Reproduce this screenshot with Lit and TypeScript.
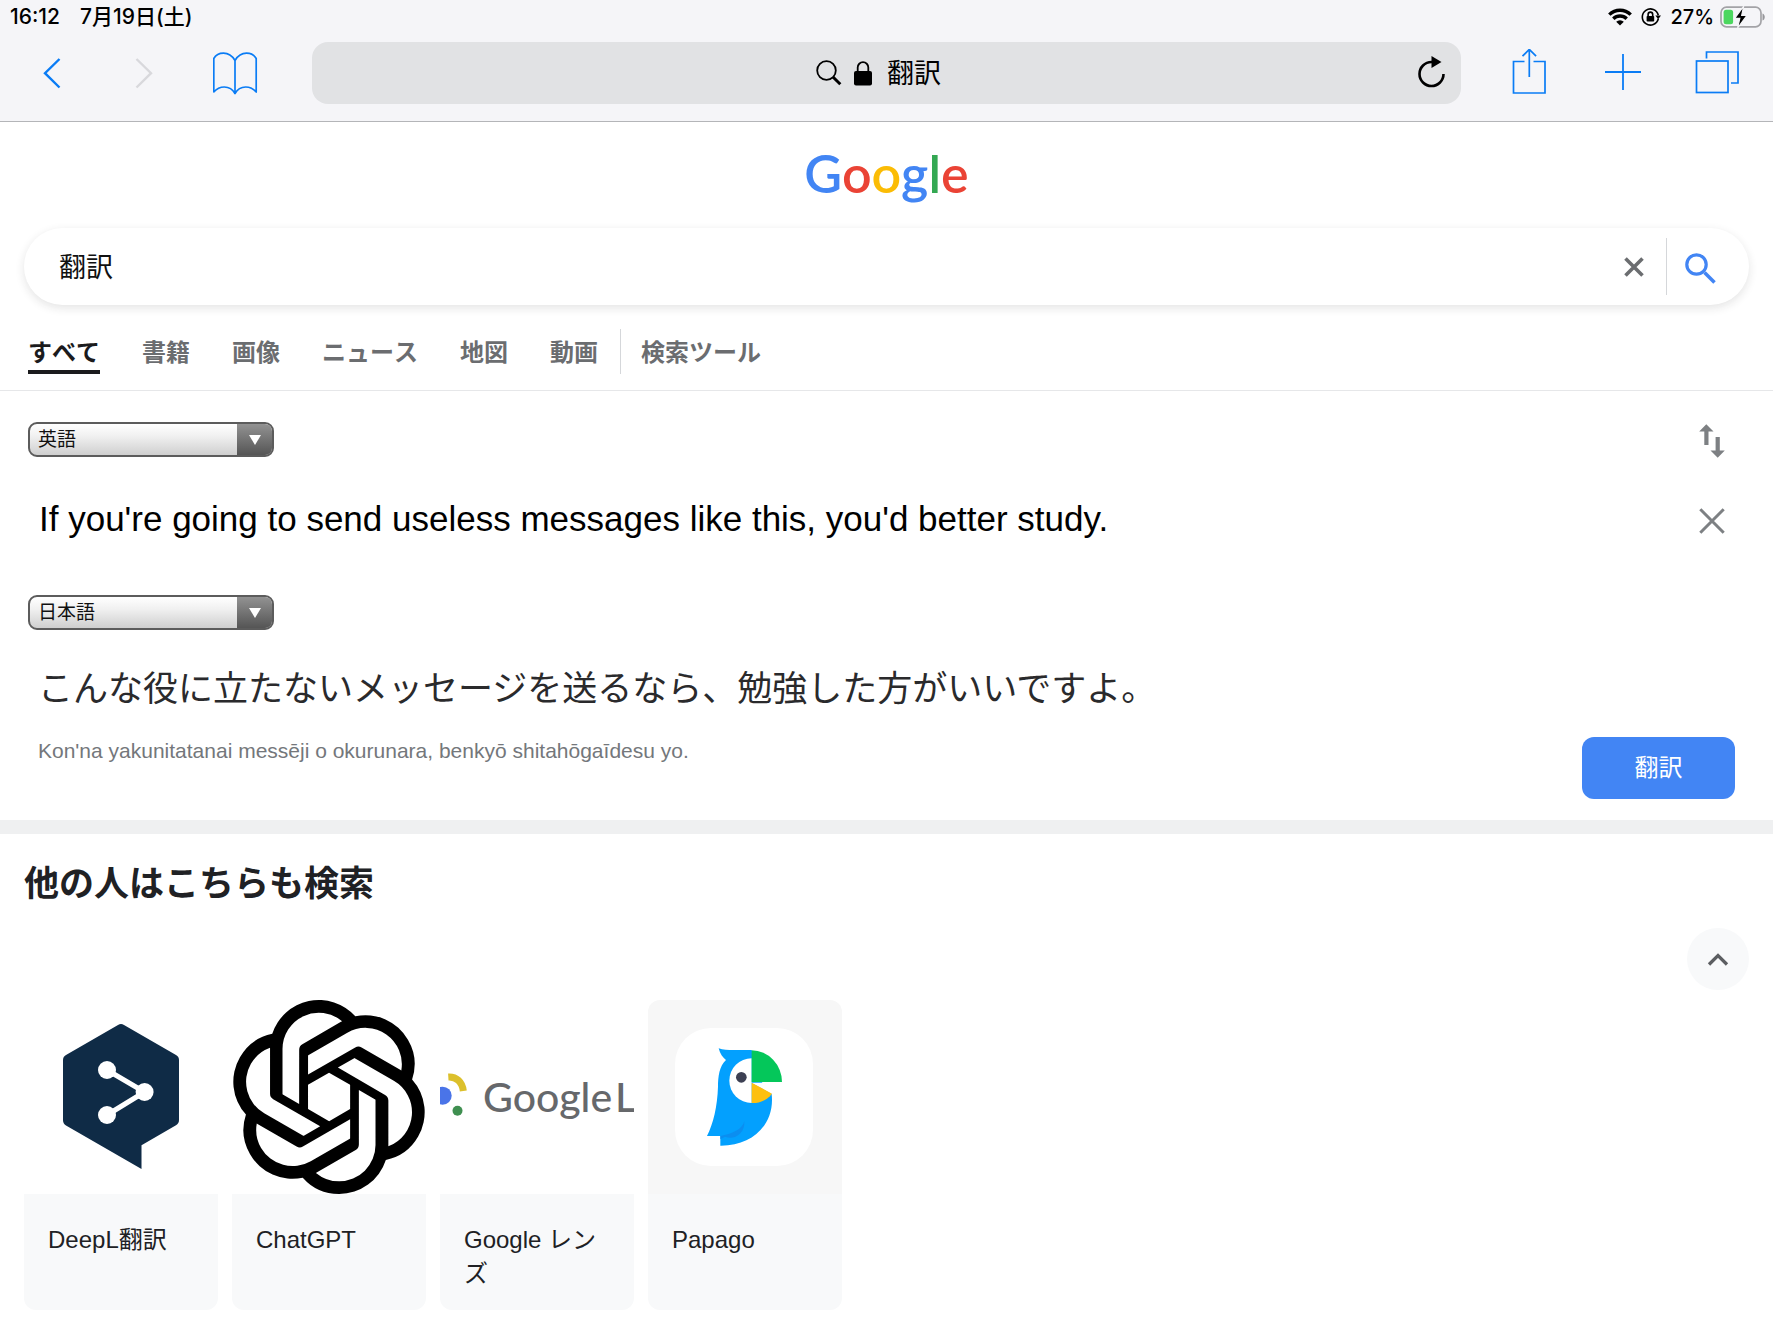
import { LitElement, html, css, svg } from "lit";
import { customElement, property, state } from "lit/decorators.js";

const fonts = css`"Liberation Sans", "Noto Sans CJK JP", sans-serif`;

/** Status line and browser toolbar. */
@customElement("browser-chrome")
class BrowserChrome extends LitElement {
  @property() query = "";

  static styles = css`
    :host {
      display: block;
      background: #f5f5f8;
      border-bottom: 1px solid #b4b5b8;
      font-family: ${fonts};
      color: #000;
    }
    svg { display: block; }
    button {
      border: 0;
      padding: 0;
      background: none;
      color: inherit;
      font: inherit;
      display: grid;
      place-items: center;
    }
    .status {
      display: flex;
      justify-content: space-between;
      align-items: center;
      height: 34px;
      padding: 0 8px 0 10px;
      font: 500 20px/24px Inter, "Noto Sans CJK JP", sans-serif;
    }
    .group { display: flex; align-items: center; }
    .clock { gap: 20px; font-size: 21px; }
    .icons { gap: 9px; }
    .percent { margin-right: -3px; }
    .toolbar {
      display: flex;
      align-items: center;
      gap: 44px;
      padding: 8px 32px 17px 28px;
      color: #0a7cf5;
    }
    .left { display: flex; gap: 44px; }
    .right { display: flex; gap: 46px; }
    .tool { width: 48px; height: 48px; }
    .tool:disabled { color: #d8d8dc; }
    .address {
      flex: 1;
      display: grid;
      grid-template-columns: 1fr auto 1fr;
      align-items: center;
      height: 62px;
      margin-left: 8px;
      padding: 0 14px;
      border-radius: 16px;
      background: #e1e2e4;
      color: #000;
    }
    .site {
      grid-column: 2;
      display: flex;
      align-items: center;
      gap: 12px;
      padding-right: 16px;
      font-size: 27px;
      line-height: 36px;
    }
    .site span { margin-left: 3px; padding-top: 2px; }
    .reload { justify-self: end; }
  `;

  render() {
    return html`
      <div class="status">
        <div class="group clock"><span>16:12</span><span>7月19日(土)</span></div>
        <div class="group icons">
          <svg width="24" height="18" viewBox="0 0 24 18" fill="none" stroke="#000" stroke-width="3.4">
            <path d="M1.3 6.6a15.2 15.2 0 0 1 21.4 0" />
            <path d="M5.3 10.8a9.5 9.5 0 0 1 13.4 0" />
            <path d="M12 17.6l-3.8-3.9a5.4 5.4 0 0 1 7.6 0z" fill="#000" stroke="none" />
          </svg>
          <svg width="20" height="20" viewBox="0 0 20 20" fill="none" stroke="#000" stroke-width="1.6">
            <path d="M17.3 11.8a8.1 8.1 0 1 1 0-3.6" />
            <path d="M14.4 8.5h5.6l-2.8 3.7z" fill="#000" stroke="none" />
            <rect x="5.6" y="9" width="7.6" height="5.6" rx=".8" fill="#000" stroke="none" />
            <path d="M7.1 9.2V7.4a2.3 2.3 0 0 1 4.6 0v1.8" />
          </svg>
          <span class="percent">27%</span>
          <svg width="45" height="22" viewBox="0 0 45 22">
            <rect x="1" y="1.2" width="40" height="19.6" rx="5.5" fill="none" stroke="#a3a3a7" stroke-width="1.7" />
            <path d="M42.500 7.500c3 1 3 6 0 7z" fill="#97979b" />
            <rect x="3.600" y="3.800" width="9.500" height="14.400" rx="2.500" fill="#4cd75f" />
            <path d="M23.700 .2L14.600 12.400h5.200L17.600 22 27 9.300h-5.300z" fill="#000" stroke="#f5f5f8" stroke-width="1.200" />
          </svg>
        </div>
      </div>
      <div class="toolbar">
        <div class="left">
          <button class="tool" aria-label="戻る">
            <svg width="20" height="32" viewBox="0 0 20 32" fill="none" stroke="currentColor" stroke-width="2.4"><path d="M17.500 2L3 16.200 17.500 30.500" /></svg>
          </button>
          <button class="tool" aria-label="進む" disabled>
            <svg width="20" height="32" viewBox="0 0 20 32" fill="none" stroke="currentColor" stroke-width="2.4"><path d="M2.500 2L17 16.200 2.500 30.500" /></svg>
          </button>
          <button class="tool" aria-label="ブックマーク">
            <svg width="46" height="44" viewBox="1 0 46 44" fill="none" stroke="currentColor" stroke-width="1.700" stroke-linejoin="round">
              <path d="M23 9.500C20 4.500 16 2.200 11.500 2.200S3.500 4.500 1.800 7.500V41c3-3.500 6.500-5 10.500-5s8.200 2 10.700 6.500c2.500-4.500 6.700-6.500 10.700-6.500s7.500 1.500 10.500 5V7.500c-1.700-3-5.200-5.300-9.700-5.300S26 4.500 23 9.500zM23 9.500v33" />
            </svg>
          </button>
        </div>
        <div class="address">
          <div class="site">
            <svg width="26" height="26" viewBox="0 0 26 26" fill="none" stroke="#000">
              <circle cx="10.500" cy="10.500" r="9.300" stroke-width="1.800" /><path d="M17 17l7.300 7.300" stroke-width="3" />
            </svg>
            <svg width="18" height="25" viewBox="0 0 18 25">
              <rect y="10" width="18" height="14.500" rx="2" /><path d="M3.700 11V6.500a5.300 5.300 0 0 1 10.600 0V11" fill="none" stroke="#000" stroke-width="1.800" />
            </svg>
            <span>${this.query}</span>
          </div>
          <button class="reload" aria-label="再読み込み">
            <svg width="30" height="34" viewBox="0 2 30 34" fill="none" stroke="#000" stroke-width="2.600">
              <path d="M26.500 20A12 12 0 1 1 14.500 8h3" /><path d="M14.500 2v12l10-6z" fill="#000" stroke="none" />
            </svg>
          </button>
        </div>
        <div class="right">
          <button class="tool" aria-label="共有">
            <svg width="36" height="48" viewBox="0 2 36 48" fill="none" stroke="currentColor" stroke-width="1.700">
              <path d="M13.500 14.500H2.500v31.500h31.500V14.500H22.500M18.300 30V2.500M11.500 9.200l6.800-6.800 6.800 6.800" />
            </svg>
          </button>
          <button class="tool" aria-label="新規タブ">
            <svg width="36" height="38" viewBox="0 0 36 38" stroke="currentColor" stroke-width="1.800"><path d="M18 0v36M0 18h36" /></svg>
          </button>
          <button class="tool" aria-label="タブ一覧">
            <svg width="44" height="44" viewBox="0 1 44 44" fill="none" stroke="currentColor" stroke-width="1.700">
              <rect x="1.500" y="11" width="31.500" height="31.500" /><path d="M11.500 8.500V2h31.500v31h-7" />
            </svg>
          </button>
        </div>
      </div>
    `;
  }
}

/** Search header: logo, search box and category tabs. */
@customElement("search-header")
class SearchHeader extends LitElement {
  @property() query = "";
  @state() private tabs = ["すべて", "書籍", "画像", "ニュース", "地図", "動画"];

  static styles = css`
    :host { display: block; border-bottom: 1px solid #e6e7e9; font-family: ${fonts}; }
    svg { display: block; }
    .logo {
      display: block;
      height: 106px;
      text-align: center;
      text-decoration: none;
      font: 600 52px/102px Lato, sans-serif;
    }
    .b { color: #4285f4; }
    .r { color: #ea4335; }
    .y { color: #fbbc05; }
    .g { color: #34a853; }
    .box {
      display: flex;
      align-items: center;
      height: 77px;
      margin: 0 24px;
      border-radius: 39px;
      background: #fff;
      box-shadow: 0 3px 10px rgba(32, 33, 36, 0.12);
    }
    .field {
      flex: 1;
      min-width: 0;
      border: 0;
      outline: 0;
      padding: 2px 35px 0;
      background: none;
      font: 27px/40px ${fonts};
      color: #111;
    }
    button { border: 0; padding: 0; background: none; display: grid; place-items: center; }
    .clear { width: 64px; height: 57px; }
    .go { width: 83px; height: 57px; padding: 3px 16px 0 0; border-left: 1px solid #d5d7da; }
    nav { display: flex; align-items: flex-start; padding: 24px 28px 16px; }
    .tabs { display: flex; gap: 42px; }
    a.tab {
      display: block;
      height: 34px;
      padding-top: 7px;
      border-bottom: 4px solid transparent;
      font-size: 24px;
      line-height: 34px;
      font-weight: 700;
      font-kerning: none;
      color: #6b6d70;
      text-decoration: none;
      white-space: nowrap;
    }
    a.current { color: #1b1b1d; border-color: #1b1b1d; }
    .tools { margin-left: 22px; padding-left: 20px; border-left: 1px solid #d5d7da; }
  `;

  render() {
    return html`
      <a class="logo" href="#" aria-label="Google"
        ><span class="b">G</span><span class="r">o</span><span class="y">o</span><span class="b">g</span><span class="g">l</span><span class="r">e</span></a
      >
      <form class="box" role="search" @submit=${(e: Event) => e.preventDefault()}>
        <input class="field" type="text" aria-label="検索" .value=${this.query} />
        <button class="clear" type="button" aria-label="クリア">
          <svg width="20" height="20" viewBox="0 0 20 20" stroke="#6b6d70" stroke-width="3.600"><path d="M1.500 1.500l17 17M18.500 1.500l-17 17" /></svg>
        </button>
        <button class="go" aria-label="検索を実行">
          <svg width="31" height="31" viewBox="0 0 31 31" fill="none" stroke="#4285f4" stroke-width="3.200">
            <circle cx="11.500" cy="11.500" r="9.700" /><path d="M19.500 19.500l10 10" stroke-width="3.600" />
          </svg>
        </button>
      </form>
      <nav>
        <div class="tabs">
          ${this.tabs.map((t, i) => html`<a class="tab ${i === 0 ? "current" : ""}" href="#">${t}</a>`)}
        </div>
        <div class="tools"><a class="tab" href="#">検索ツール</a></div>
      </nav>
    `;
  }
}

/** Translation card. */
@customElement("translate-card")
class TranslateCard extends LitElement {
  static styles = css`
    :host { display: block; padding: 31px 38px 21px 28px; border-bottom: 14px solid #eff0f1; font-family: ${fonts}; }
    svg { display: block; }
    .row { display: flex; justify-content: space-between; align-items: center; }
    .picker {
      display: grid;
      grid-template-columns: 1fr 35px;
      box-sizing: border-box;
      width: 246px;
      height: 35px;
      border: 2px solid #5c5c5c;
      border-radius: 9px;
      overflow: hidden;
      background: linear-gradient(#fff, #f0f0f0 40%, #cfcfcf);
    }
    select {
      grid-area: 1 / 1 / 2 / 3;
      appearance: none;
      border: 0;
      outline: 0;
      padding: 1px 44px 0 8px;
      background: none;
      font: 19px/28px ${fonts};
      color: #111;
    }
    .arrow {
      grid-area: 1 / 2;
      display: grid;
      place-items: center;
      background: linear-gradient(#929292, #555);
      pointer-events: none;
    }
    .icon { border: 0; padding: 3px 0 0; background: none; width: 46px; height: 38px; display: grid; place-items: center; }
    .top { height: 35px; }
    .source { height: 50px; margin: 37px 0 51px; }
    textarea {
      flex: 1;
      height: 50px;
      border: 0;
      outline: 0;
      padding: 0 0 0 11px;
      resize: none;
      overflow: hidden;
      background: none;
      font: 35px/50px ${fonts};
      color: #000;
    }
    .result { margin: 34px 0 23px; padding-left: 10px; font-size: 35px; line-height: 50px; color: #2a2a2c; }
    .foot { display: flex; justify-content: space-between; align-items: flex-start; }
    .romaji { margin: 0; padding-left: 10px; font-size: 21px; line-height: 28px; color: #74777b; }
    .submit {
      width: 153px;
      height: 62px;
      border: 0;
      border-radius: 12px;
      background: #4285f4;
      color: #fff;
      font: 24px/32px ${fonts};
    }
  `;

  private picker(label: string, options: string[]) {
    return html`<div class="picker">
      <select aria-label=${label}>${options.map((o) => html`<option>${o}</option>`)}</select>
      <span class="arrow"><svg width="12" height="10" viewBox="0 0 12 10" fill="#fff"><path d="M0 0h12L6 10z" /></svg></span>
    </div>`;
  }

  render() {
    return html`
      <div class="row top">
        ${this.picker("翻訳元の言語", ["英語", "日本語"])}
        <button class="icon" aria-label="言語を入れ替え">
          <svg width="26" height="34" viewBox="0 0 26 34" fill="#7d8083">
            <path d="M7.300 .3l7.200 7.200H9.500V21h-4.200V7.500H.2zM18.700 33.700l-7.200-7.200h5.100V13h4.200v13.500h5z" />
          </svg>
        </button>
      </div>
      <div class="row source">
        <textarea rows="1" aria-label="原文" .value=${"If you're going to send useless messages like this, you'd better study."}></textarea>
        <button class="icon" aria-label="原文を消去">
          <svg width="26" height="26" viewBox="0 0 26 26" stroke="#7d8083" stroke-width="3"><path d="M1.300 1.300l23.400 23.400M24.700 1.300L1.300 24.700" /></svg>
        </button>
      </div>
      ${this.picker("翻訳先の言語", ["日本語", "英語"])}
      <div class="result">こんな役に立たないメッセージを送るなら、勉強した方がいいですよ。</div>
      <div class="foot">
        <p class="romaji">Kon'na yakunitatanai messēji o okurunara, benkyō shitahōgaīdesu yo.</p>
        <button class="submit">翻訳</button>
      </div>
    `;
  }
}

const deepl = svg`
  <path d="M94 25q3-1.800 6 0l52 30q3 1.700 3 5v60q0 3.500-3 5.200l-34.500 20V169L42 125.500q-3-1.800-3-5.200V60q0-3.300 3-5z" fill="#0f2b46"/>
  <path d="M83 70l37.600 22L83 115" fill="none" stroke="#fff" stroke-width="5"/>
  <g fill="#fff"><circle cx="83" cy="70" r="9"/><circle cx="120.600" cy="92" r="9"/><circle cx="83" cy="115" r="9"/></g>`;

const knot = svg`<path transform="scale(8.083)" d="M22.2819 9.8211a5.9847 5.9847 0 0 0-.5157-4.9108 6.0462 6.0462 0 0 0-6.5098-2.9A6.0651 6.0651 0 0 0 4.9807 4.1818a5.9847 5.9847 0 0 0-3.9977 2.9 6.0462 6.0462 0 0 0 .7427 7.0966 5.98 5.98 0 0 0 .511 4.9107 6.051 6.051 0 0 0 6.5146 2.9001A5.9847 5.9847 0 0 0 13.2599 24a6.0557 6.0557 0 0 0 5.7718-4.2058 5.9894 5.9894 0 0 0 3.9977-2.9001 6.0557 6.0557 0 0 0-.7475-7.0729zm-9.022 12.6081a4.4755 4.4755 0 0 1-2.8764-1.0408l.1419-.0804 4.7783-2.7582a.7948.7948 0 0 0 .3927-.6813v-6.7369l2.02 1.1686a.071.071 0 0 1 .038.052v5.5826a4.504 4.504 0 0 1-4.4945 4.4944zm-9.6607-4.1254a4.4708 4.4708 0 0 1-.5346-3.0137l.142.0852 4.783 2.7582a.7712.7712 0 0 0 .7806 0l5.8428-3.3685v2.3324a.0804.0804 0 0 1-.0332.0615L9.74 19.9502a4.4992 4.4992 0 0 1-6.1408-1.6464zM2.3408 7.8956a4.485 4.485 0 0 1 2.3655-1.9728V11.6a.7664.7664 0 0 0 .3879.6765l5.8144 3.3543-2.0201 1.1685a.0757.0757 0 0 1-.071 0l-4.8303-2.7865A4.504 4.504 0 0 1 2.3408 7.872zm16.5963 3.8558L13.1038 8.364 15.1192 7.2a.0757.0757 0 0 1 .071 0l4.8303 2.7913a4.4944 4.4944 0 0 1-.6765 8.1042v-5.6772a.79.79 0 0 0-.407-.667zm2.0107-3.0231l-.142-.0852-4.7735-2.7818a.7759.7759 0 0 0-.7854 0L9.409 9.2297V6.8974a.0662.0662 0 0 1 .0284-.0615l4.8303-2.7866a4.4992 4.4992 0 0 1 6.6802 4.66zM8.3065 12.863l-2.02-1.1638a.0804.0804 0 0 1-.038-.0567V6.0742a4.4992 4.4992 0 0 1 7.3757-3.4537l-.142.0805L8.704 5.459a.7948.7948 0 0 0-.3927.6813zm1.0976-2.3654l2.602-1.4998 2.6069 1.4998v2.9994l-2.5974 1.4997-2.6067-1.4997Z"/>`;

const lens = svg`
  <circle cx="2.700" cy="95.700" r="9" fill="#4a74e8"/>
  <path d="M8.300 77c8-.5 14 5 15 14" fill="none" stroke="#dcc02c" stroke-width="7"/>
  <circle cx="17.500" cy="110.700" r="5" fill="#3f8f50"/>
  <text x="43" y="112" font-family="Lato, sans-serif" font-size="41" font-weight="500" fill="#66686b">Google<tspan x="175">L</tspan></text>`;

const parrot = svg`
  <rect width="194" height="194" fill="#f7f7f7"/>
  <rect x="27" y="28" width="138" height="138" rx="36" fill="#fff"/>
  <g transform="translate(-228 -20) scale(.33333)">
    <path d="M896 205C908 210 925 210 940 210H995L1020 300 1055 342C1065 430 1000 498 901 497V468H861C880 430 892 380 894 320 894 290 898 258 918 240 908 232 900 222 896 205z" fill="#03a0fe"/>
    <path d="M901 468C935 462 968 448 973 423 976 462 940 482 915 470L901 478z" fill="#0b8ef0"/>
    <path d="M995 235A67 67 0 0 0 995 369z" fill="#fff"/>
    <path d="M995 308V309L1055 342 1090 308z" fill="#fff"/>
    <path d="M995 211A92 95 0 0 1 1086 306H995z" fill="#04c75a"/>
    <path d="M995 308L1056 341C1042 360 1020 370 995 369z" fill="#fdc00f"/>
    <circle cx="964" cy="292" r="16" fill="#3c4053"/>
  </g>`;

/** "People also search for" list. */
@customElement("related-searches")
class RelatedSearches extends LitElement {
  private items = [
    { name: "DeepL翻訳", art: deepl },
    { name: "ChatGPT", art: knot },
    { name: "Google レンズ", art: lens },
    { name: "Papago", art: parrot },
  ];

  static styles = css`
    :host { display: block; padding: 25px 24px 19px; font-family: ${fonts}; }
    svg { display: block; }
    h2 { margin: 0 0 19px; font-size: 35px; line-height: 50px; font-weight: 700; color: #202124; }
    .toggle {
      display: grid;
      place-items: center;
      width: 62px;
      height: 62px;
      margin: 0 0 10px auto;
      border: 0;
      padding: 0;
      border-radius: 50%;
      background: #f8f9fa;
    }
    .cards { display: flex; flex-wrap: wrap; gap: 14px; }
    .card {
      width: 194px;
      border-radius: 12px;
      overflow: hidden;
      color: #202124;
      text-decoration: none;
    }
    .name {
      box-sizing: border-box;
      min-height: 116px;
      padding: 29px 24px 19px;
      background: #f8f9fa;
      font-size: 24px;
      line-height: 34px;
      word-break: break-all;
    }
  `;

  render() {
    return html`
      <h2>他の人はこちらも検索</h2>
      <button class="toggle" aria-label="折りたたむ">
        <svg width="22" height="14" viewBox="0 0 22 14" fill="none" stroke="#5c5e61" stroke-width="3.300"><path d="M2 12.500l9-9 9 9" /></svg>
      </button>
      <div class="cards">
        ${this.items.map(
          (i) => html`<a class="card" href="#">
            <svg width="194" height="194" viewBox="0 0 194 194" aria-hidden="true">${i.art}</svg>
            <div class="name">${i.name}</div>
          </a>`
        )}
      </div>
    `;
  }
}

@customElement("app-root")
class AppRoot extends LitElement {
  static styles = css`
    :host { display: block; min-height: 100vh; background: #fff; }
  `;

  render() {
    return html`
      <browser-chrome query="翻訳"></browser-chrome>
      <main>
        <search-header query="翻訳"></search-header>
        <translate-card></translate-card>
        <related-searches></related-searches>
      </main>
    `;
  }
}
